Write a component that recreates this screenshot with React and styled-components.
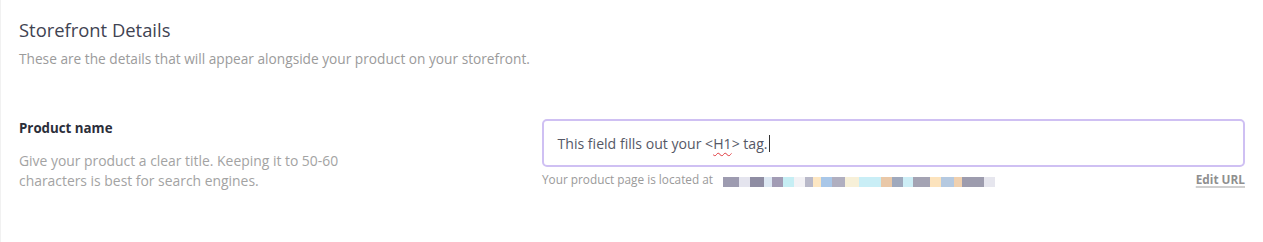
import React from "react";
import styled, { createGlobalStyle } from "styled-components";

const GlobalStyle = createGlobalStyle`
  html, body {
    margin: 0;
    padding: 0;
    background: #ffffff;
  }
  body {
    font-family: "Open Sans", Lato, "Liberation Sans", sans-serif;
  }
`;

const Page = styled.div`
  height: 242px;
  box-sizing: border-box;
  border-left: 1px solid #f1f1f1;
  padding: 18px 18px 0 18px;
`;

const Title = styled.h2`
  margin: 0;
  font-size: 18.4px;
  font-weight: 400;
  color: #3f4352;
  line-height: 24px;
`;

const Subtitle = styled.p`
  margin: 8px 0 0;
  font-size: 13.7px;
  color: #9b9b9b;
  line-height: 18px;
`;

const FieldRow = styled.div`
  display: grid;
  grid-template-columns: 523px 1fr;
  margin-top: 51px;
`;

const LabelCol = styled.div`
  display: flex;
  flex-direction: column;
`;

const Label = styled.div`
  font-size: 13.3px;
  font-weight: 700;
  color: #2b2e3a;
  line-height: 20px;
  margin-top: -1px;
`;

const Help = styled.div`
  margin-top: 13px;
  width: 360px;
  font-size: 13.9px;
  line-height: 20px;
  color: #a3a3a3;
`;

const InputCol = styled.div`
  display: flex;
  flex-direction: column;
`;

const FakeInput = styled.div`
  height: 48px;
  box-sizing: border-box;
  border: 2px solid #cfc0f3;
  border-radius: 5px;
  padding: 0 13.5px;
  display: flex;
  align-items: center;
  font-size: 14.1px;
  color: #555866;
`;

const Misspelled = styled.span`
  text-decoration: underline wavy #e0393e;
  text-decoration-thickness: 1px;
  text-underline-offset: 3px;
`;

const Caret = styled.span`
  display: inline-block;
  width: 1px;
  height: 17px;
  background: #333;
  margin-left: 1px;
  vertical-align: middle;
`;

const UrlRow = styled.div`
  display: flex;
  align-items: center;
  margin-top: 5px;
  font-size: 11.8px;
  color: #9a9a9a;
  line-height: 15px;
`;

const UrlBlur = styled.span`
  display: inline-block;
  width: 272px;
  height: 10px;
  margin-left: 10px;
  margin-top: 4px;
  background: linear-gradient(
    90deg,
    #9d9bb0 0 6%,
    #e4e4ee 6% 10%,
    #8f8da3 10% 15%,
    #dde8f3 15% 18%,
    #a29cb5 18% 22%,
    #c6eef4 22% 26%,
    #f3f2f5 26% 30%,
    #b9b9c9 30% 33%,
    #fde7c3 33% 36%,
    #a9c7e8 36% 40%,
    #b0afc0 40% 45%,
    #f7f0d8 45% 50%,
    #c9eef6 50% 58%,
    #e9c8a8 58% 62%,
    #9fa9bd 62% 66%,
    #cdeef6 66% 70%,
    #a4a3b3 70% 76%,
    #fce3bd 76% 80%,
    #b5c9e0 80% 85%,
    #f0d0ae 85% 88%,
    #9d9cae 88% 96%,
    #e6e6ee 96% 100%
  );
`;

const Spacer = styled.span`
  flex: 1;
`;

const EditLink = styled.a`
  font-weight: 700;
  color: #8f8f8f;
  text-decoration: underline;
  text-decoration-color: #cfcfcf;
  text-decoration-thickness: 2px;
  text-underline-offset: 2px;
  cursor: pointer;
`;

export default function App() {
  return (
    <>
      <GlobalStyle />
      <Page>
        <Title>Storefront Details</Title>
        <Subtitle>
          These are the details that will appear alongside your product on your storefront.
        </Subtitle>
        <FieldRow>
          <LabelCol>
            <Label>Product name</Label>
            <Help>
              Give your product a clear title. Keeping it to 50-60 characters is best for search
              engines.
            </Help>
          </LabelCol>
          <InputCol>
            <FakeInput>
              <span>
                This field fills out your &lt;<Misspelled>H1</Misspelled>&gt; tag.
              </span>
              <Caret />
            </FakeInput>
            <UrlRow>
              <span>Your product page is located at</span>
              <UrlBlur />
              <Spacer />
              <EditLink>Edit URL</EditLink>
            </UrlRow>
          </InputCol>
        </FieldRow>
      </Page>
    </>
  );
}
